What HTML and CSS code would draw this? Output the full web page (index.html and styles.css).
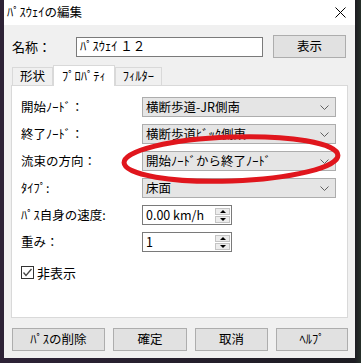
FILE: index.html
```html
<!DOCTYPE html>
<html lang="ja">
<head>
  <meta charset="UTF-8">
  <title>ﾊﾟｽｳｪｲの編集</title>
  <link rel="stylesheet" href="styles.css">
</head>
<body>
  <!-- ダイアログ本体 -->
  <div class="window">
    <div class="titlebar">
      <span class="title">ﾊﾟｽｳｪｲの編集</span>
      <svg class="close" width="11" height="11" viewBox="0 0 11 11">
        <path d="M0.5 0.5 L10.5 10.5 M10.5 0.5 L0.5 10.5" stroke="#000" stroke-width="1" fill="none"/>
      </svg>
    </div>

    <div class="content">
      <div class="name-row">
        <span class="name-label">名称：</span>
        <div class="textbox name-box">ﾊﾟｽｳｪｲ １２</div>
        <div class="btn show-btn">表示</div>
      </div>

      <div class="tabs">
        <div class="tab">形状</div>
        <div class="tab active">ﾌﾟﾛﾊﾟﾃｨ</div>
        <div class="tab">ﾌｨﾙﾀｰ</div>
      </div>

      <div class="panel">
        <div class="form">
          <div class="field-label">開始ﾉｰﾄﾞ：</div>
          <div class="combo"><span>横断歩道-JR側南</span><svg class="chev" width="9" height="5" viewBox="0 0 9 5"><polyline points="0.5,0.5 4.5,4.5 8.5,0.5" fill="none" stroke="#606060"/></svg></div>

          <div class="field-label">終了ﾉｰﾄﾞ：</div>
          <div class="combo"><span>横断歩道ﾋﾞｯｸ側東</span><svg class="chev" width="9" height="5" viewBox="0 0 9 5"><polyline points="0.5,0.5 4.5,4.5 8.5,0.5" fill="none" stroke="#606060"/></svg></div>

          <div class="field-label">流束の方向：</div>
          <div class="combo"><span>開始ﾉｰﾄﾞから終了ﾉｰﾄﾞ</span><svg class="chev" width="9" height="5" viewBox="0 0 9 5"><polyline points="0.5,0.5 4.5,4.5 8.5,0.5" fill="none" stroke="#606060"/></svg></div>

          <div class="field-label">ﾀｲﾌﾟ:</div>
          <div class="combo"><span>床面</span><svg class="chev" width="9" height="5" viewBox="0 0 9 5"><polyline points="0.5,0.5 4.5,4.5 8.5,0.5" fill="none" stroke="#606060"/></svg></div>

          <div class="field-label">ﾊﾟｽ自身の速度:</div>
          <div class="textbox spin"><span>0.00 km/h</span>
            <div class="spin-btns"><div class="spin-up"></div><div class="spin-down"></div></div>
          </div>

          <div class="field-label">重み：</div>
          <div class="textbox spin"><span>1</span>
            <div class="spin-btns"><div class="spin-up"></div><div class="spin-down"></div></div>
          </div>
        </div>

        <div class="check-row">
          <svg class="checkbox" width="13" height="13" viewBox="0 0 13 13">
            <rect x="0.5" y="0.5" width="12" height="12" fill="#fff" stroke="#333"/>
            <polyline points="2.5,6.5 5,9.5 10.5,3" fill="none" stroke="#444" stroke-width="1.3"/>
          </svg>
          <span>非表示</span>
        </div>

        <!-- 赤い丸印 -->
        <svg class="mark" width="337" height="233" viewBox="0 0 337 233">
          <ellipse cx="220" cy="74" rx="107" ry="22" transform="rotate(-2 220 74)" fill="none" stroke="#e0161d" stroke-width="5"/>
        </svg>
      </div>

      <div class="actions">
        <div class="btn w-del">ﾊﾟｽの削除</div>
        <div class="btn w-ok">確定</div>
        <div class="btn w-cancel">取消</div>
        <div class="btn w-help">ﾍﾙﾌﾟ</div>
      </div>
    </div>
  </div>
</body>
</html>
```

FILE: styles.css
```css
/* ページ全体 */
html, body {
  margin: 0;
  padding: 0;
  background: linear-gradient(90deg, #2d2236 0, #2d2236 4px, #1d1c22 355px, #26302a 100%);
  font-family: "Noto Sans CJK JP", "Noto Sans", sans-serif;
  font-size: 12.5px;
  color: #000;
}

/* ウィンドウ */
.window {
  width: 351px;
  height: 358px;
  margin-left: 4px;
  background: #f0f0f0;
  box-sizing: border-box;
  display: flex;
  flex-direction: column;
}

/* タイトルバー */
.titlebar {
  height: 25px;
  background: #fff;
  display: flex;
  align-items: center;
  padding: 0 9px 0 3px;
  justify-content: space-between;
}

.title {
  font-size: 12.5px;
  line-height: 1;
}

.content {
  padding: 10px 7px 0 7px;
}

/* 名称の行 */
.name-row {
  display: flex;
  align-items: center;
  height: 23px;
}

.name-label {
  width: 64px;
  margin-left: 1px;
  font-size: 13px;
}

.textbox {
  background: #fff;
  border: 1px solid #7a7a7a;
  box-sizing: border-box;
  display: flex;
  align-items: center;
  padding-left: 3px;
  line-height: 1;
}

.name-box {
  width: 187px;
  height: 20px;
}

.btn {
  background: #e1e1e1;
  border: 1px solid #adadad;
  box-sizing: border-box;
  height: 23px;
  display: flex;
  align-items: center;
  justify-content: center;
  line-height: 1;
}

.show-btn {
  width: 73px;
  margin-left: 10px;
}

/* タブ */
.tabs {
  display: flex;
  align-items: flex-end;
  margin-top: 7px;
  padding-left: 1px;
  height: 20px;
  position: relative;
  z-index: 1;
}

.tab {
  height: 18px;
  padding: 0 7px;
  border: 1px solid #d9d9d9;
  border-bottom: none;
  background: #f0f0f0;
  box-sizing: border-box;
  display: flex;
  align-items: center;
  line-height: 1;
}

.tab + .tab {
  border-left: none;
}

.tab.active {
  height: 21px;
  background: #fff;
  padding: 0 8px;
  margin-bottom: -1px;
  border-left: 1px solid #d9d9d9;
}

.tab.active + .tab {
  border-left: 1px solid #d9d9d9;
}

/* タブの中身 */
.panel {
  position: relative;
  height: 233px;
  background: #fff;
  border: 1px solid #d9d9d9;
  box-sizing: border-box;
}

.form {
  display: grid;
  grid-template-columns: 121px 194px;
  grid-auto-rows: 20px;
  row-gap: 7px;
  padding: 11px 0 0 9px;
  align-items: center;
}

.field-label {
  line-height: 1;
}

.combo {
  height: 20px;
  background: #e5e5e5;
  border: 1px solid #adadad;
  box-sizing: border-box;
  display: flex;
  align-items: center;
  justify-content: space-between;
  padding: 0 6px 0 3px;
  line-height: 1;
}

.spin {
  width: 90px;
  height: 20px;
  justify-content: space-between;
  padding-right: 1px;
}

.spin-btns {
  display: flex;
  flex-direction: column;
  gap: 1px;
}

.spin-up, .spin-down {
  width: 15px;
  height: 7px;
  background: #ececec;
  border: 1px solid #c4c4c4;
  box-sizing: border-box;
  position: relative;
}

.spin-up::after, .spin-down::after {
  content: "";
  position: absolute;
  left: 4px;
  border-left: 3px solid transparent;
  border-right: 3px solid transparent;
}

.spin-up::after {
  top: 1px;
  border-bottom: 3px solid #000;
}

.spin-down::after {
  top: 1px;
  border-top: 3px solid #000;
}

/* チェックボックス */
.check-row {
  display: flex;
  align-items: center;
  gap: 3px;
  margin: 14px 0 0 9px;
  font-size: 13px;
  line-height: 1;
}

/* 赤い丸印 */
.mark {
  position: absolute;
  left: -1px;
  top: -1px;
  overflow: visible;
  pointer-events: none;
}

/* 下のボタン */
.actions {
  display: flex;
  gap: 8px;
  margin: 10px 0 0 1px;
}

.w-del { width: 93px; }
.w-ok { width: 74px; }
.w-cancel { width: 73px; }
.w-help { width: 72px; }
```
